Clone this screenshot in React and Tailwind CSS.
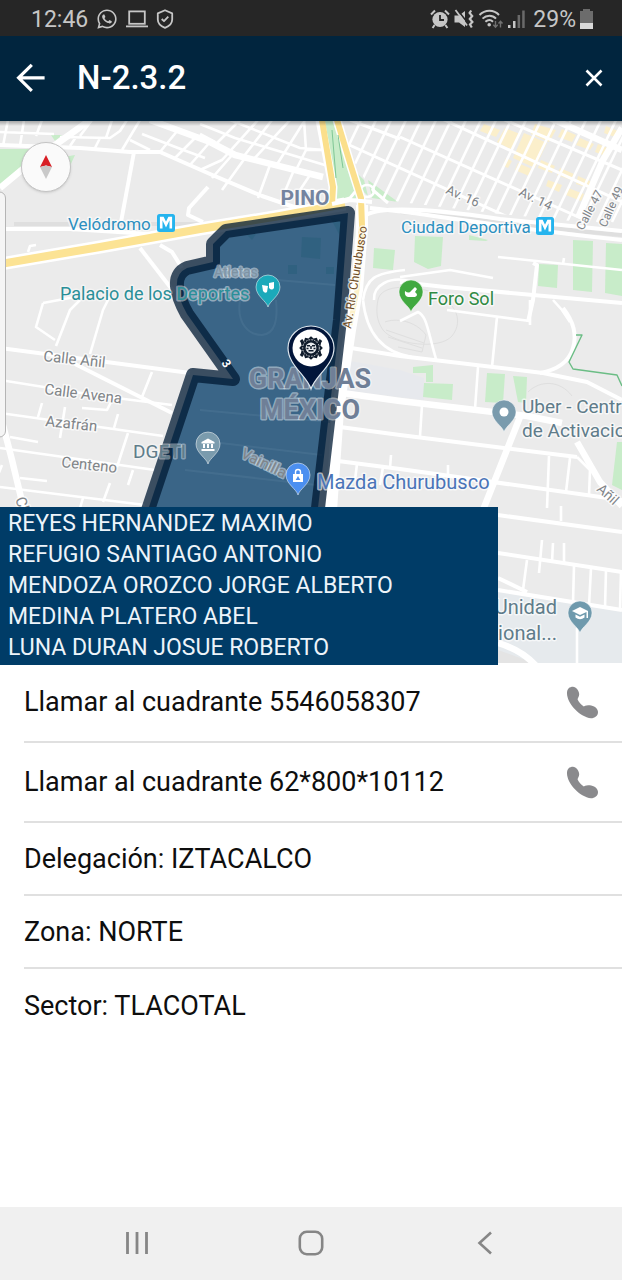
import React from "react";
import { FaWhatsapp } from "react-icons/fa";

const officers = [
  "REYES HERNANDEZ MAXIMO",
  "REFUGIO SANTIAGO ANTONIO",
  "MENDOZA OROZCO JORGE ALBERTO",
  "MEDINA PLATERO ABEL",
  "LUNA DURAN JOSUE ROBERTO",
];

const calls = [
  { label: "Llamar al cuadrante 5546058307", href: "tel:5546058307" },
  { label: "Llamar al cuadrante 62*800*10112", href: "tel:62*800*10112" },
];

const details = ["Delegación: IZTACALCO", "Zona: NORTE", "Sector: TLACOTAL"];

/* ---------- status bar ---------- */

function StatusBar() {
  return (
    <div className="flex h-9 items-center justify-between bg-[#262626] pr-[29px] pl-[31px] pt-0.5 text-[23px] leading-none text-[#c6c6c6]">
      <div className="flex items-center gap-2">
        <span>12:46</span>
        <FaWhatsapp className="size-[22px]" aria-hidden="true" />
        <svg className="h-[18px] w-[22px]" viewBox="0 0 22 18" fill="none" stroke="currentColor" strokeWidth="1.8" aria-hidden="true">
          <rect x="3.2" y="1.4" width="15.6" height="12.4" />
          <path d="M0 16.4h22" />
        </svg>
        <svg className="h-5 w-[18px]" viewBox="0 0 18 20" fill="none" stroke="currentColor" strokeWidth="1.8" strokeLinejoin="round" aria-hidden="true">
          <path d="M9 1.2 L16.2 4.4 V10.4 C16.2 14.2 13.4 17 9 18.8 C4.6 17 1.8 14.2 1.8 10.4 V4.4 Z" />
          <path d="M5.7 10 L8 12.2 L12.3 7.6" />
        </svg>
      </div>
      <div className="flex items-center gap-1">
        <svg className="size-5" viewBox="0 0 20 20" aria-hidden="true">
          <circle cx="10" cy="10.5" r="7.6" fill="currentColor" />
          <path d="M1 5.5 L5 1.5 M19 5.5 L15 1.5" stroke="currentColor" strokeWidth="2" fill="none" />
          <path d="M4.6 16 L2.6 19 M15.4 16 L17.4 19" stroke="currentColor" strokeWidth="2" />
          <path d="M10 6 V11 H14" stroke="#262626" strokeWidth="1.8" fill="none" />
        </svg>
        <svg className="size-5" viewBox="0 0 20 20" aria-hidden="true">
          <path d="M.5 6.5 H5 L11 2 V18 L5 13.500 H.5 Z" fill="currentColor" />
          <path d="M3.200 .5 L13 13" stroke="#262626" strokeWidth="1.600" />
          <path d="M1.500 1 L13 16.500" stroke="currentColor" strokeWidth="1.800" />
          <path d="M17.200 1.500 L15.600 4 L18.200 7 L15.800 10 L18.400 13 L16 15.500 L17.800 18.500" stroke="currentColor" strokeWidth="2.200" fill="none" />
        </svg>
        <svg className="h-5 w-[26px]" viewBox="0 0 26 20" fill="none" stroke="currentColor" aria-hidden="true">
          <path d="M1.5 6 C7 .4 16 .4 21 6 M4.5 9.6 C8.5 5.8 14.5 5.8 18 9.6 M7.4 12.8 C9.8 10.6 12.8 10.6 15 12.8" strokeWidth="2" />
          <circle cx="11.2" cy="15.8" r="1.8" fill="currentColor" stroke="none" />
          <path d="M17.5 12 V18 M15.3 15.8 L17.5 18.2 L19.7 15.8 M22.5 18.5 V12.5 M20.5 14.5 L22.5 12.2 L24.5 14.5" stroke="#707070" strokeWidth="1.4" />
        </svg>
        <svg className="h-5 w-[17px]" viewBox="0 0 17 20" aria-hidden="true">
          <path d="M0 16h2.5v3H0z M5 12h2.5v7H5z" fill="currentColor" />
          <path d="M9.6 6h2.5v13H9.6z M14.2 1.5h2.5v17.5h-2.5z" fill="#6a6a6a" />
        </svg>
        <span className="ml-1">29%</span>
        <svg className="h-5 w-[13px]" viewBox="0 0 13 20" aria-hidden="true">
          <path d="M3 0h7v2h3v18H0V2h3z" fill="#6c6c6c" />
          <path d="M0 14h13v6H0z" fill="#d8d8d8" />
        </svg>
      </div>
    </div>
  );
}

function Header() {
  return (
    <header className="flex h-[85px] items-center bg-[#01253e] pr-[19px] pb-0.5 pl-4 text-white">
      <button type="button" aria-label="Volver" className="flex size-[30px] items-center justify-center">
        <svg className="size-[30px]" viewBox="0 0 30 30" fill="none" stroke="currentColor" strokeWidth="3.2" aria-hidden="true">
          <path d="M15.8 1.8 L2.6 14.8 L15.8 27.8 M3 14.8 H28.6" />
        </svg>
      </button>
      <h1 className="ml-[31px] grow text-[33px] leading-none font-medium">N-2.3.2</h1>
      <button type="button" aria-label="Cerrar" className="flex size-[18px] items-center justify-center">
        <svg className="size-[18px]" viewBox="0 0 18 18" stroke="currentColor" strokeWidth="2.6" aria-hidden="true">
          <path d="M1.5 1.5 L16.5 16.5 M16.5 1.5 L1.5 16.5" />
        </svg>
      </button>
    </header>
  );
}

/* ---------- map ---------- */

const wideRoads = [
  "M0 188 L30 163 L90 120",
  "M150 120 L210 142 L235 155 L323 177",
  "M550 118 L622 150",
  "M622 128 L603 160 L578 218",
  "M335 392 L400 401 L527 416 L562 423",
  "M520 417 L485 505 L473 535",
  "M3 425 L12 460 L24 510",
  "M577 442 L600 482 L622 506",
  "M498 643 C515 648 527 655 538 668",
];

const mediumRoads = [
  "M0 145 L80 148 L130 152 L160 152 L210 174 L262 196 L300 209",
  "M134 152 L121 222",
  "M0 229 L70 229 L150 234",
  "M140 248 L174 292",
  "M160 245 L172 252 L182 268",
  "M345 347 L400 356 L543 373 L587 382 L622 400",
  "M563 308 C574 322 577 335 573 348 C569 362 556 370 540 373",
  "M0 348 L190 373",
  "M75 364 L172 413",
  "M340 427 L400 435 L577 457",
  "M400 282 L445 287 L622 303",
  "M338 461 L400 469 L622 500",
  "M498 515 L622 532",
  "M498 553 L622 572",
  "M498 590 L622 610",
  "M498 578 L527 592",
  "M366 215 C375 210 400 204 500 219 L622 231",
  "M370 208 C430 214 500 227 622 240",
  "M208 187 L189 208 L188 215 L203 222",
  "M533 263 L537 265 L533 300 L528 322",
];

const thinRoads = [
  "M0 132 L54 134 M8 120 L3 146 M24 120 L20 146 M42 120 L36 136 M60 137 L110 138 L120 131 L127 120 M70 146 L76 137 M95 148 L100 138 M80 136 L92 120 M106 138 L112 120 M122 150 L140 120",
  "M160 152 L178 130 M175 158 L196 137 M190 165 L210 142 M142 134 L178 148 L205 158 M130 140 L150 150",
  "M200 170 L222 160 L258 120 M233 154 L212 178 M253 160 L290 120 M276 166 L305 120 M296 170 L306 150 L304 120 M230 120 L300 148 L324 150 M200 124 L235 138 L328 166 M222 190 L245 158 M258 198 L270 165 M240 120 L214 146 M272 120 L244 156 M200 134 L215 142",
  "M300 190 L310 175 M280 203 L294 170 M306 150 L326 150 M304 190 L330 192",
  "M498 257 L622 270 M553 300 L562 310 L570 322 M400 277 L450 270 L493 278 M564 258 L563 264",
  "M447 310 L530 321 M530 300 L530 325 M497 317 L492 367",
  "M400 321 L418 312 C427 316 428 332 436 359",
  "M363 300 C366 330 380 352 412 357 M374 300 C373 285 390 276 410 281 M363 300 C366 278 375 273 405 270",
  "M422 405 L420 436 M478 367 L475 409 M549 456 L547 508 M570 458 L566 492 M577 457 L590 470 L589 496 M448 465 L448 475",
  "M357 464 L355 480 M383 467 L380 485 M391 455 L390 468",
  "M542 540 L539 573 M553 543 L552 562 M564 543 L564 563 M561 506 L561 521 M527 560 L523 590 M574 566 L573 603 M591 568 L589 606 M606 570 L605 608 M621 572 L620 610 M577 628 L577 664",
  "M0 380 L100 396 L172 405 M0 413 L163 436 M0 448 L155 470 M0 487 L145 505",
  "M152 372 L142 397 M118 414 L114 428 M128 433 L117 467 M65 407 L60 438 M42 403 L38 417 M133 470 L128 485 M110 483 L103 502 M82 408 L107 410 L112 400 M10 437 L38 442 M20 478 L47 481 M83 498 L80 508 M2 465 L-2 475",
  "M43 303 L36 327 L55 340 M80 300 L70 310 L56 346 M110 296 L103 310 L90 354 M43 303 L75 297",
  "M28 252 L30 246 L36 245",
];

const greens = [
  "M0 149 L42 149 L0 187 Z",
  "M51 135 L62 135 L55 141 Z",
  "M58 158 L75 155 L65 177 Z",
  "M415 236 L443 237 L441 266 L428 269 L414 262 Z",
  "M469 235 L488 240 L486 241 L469 240 Z",
  "M573 240 L593 241 L592 292 L573 290 Z",
  "M606 243 L622 244 L622 296 L605 293 Z",
  "M539 264 L558 265 L557 288 L538 286 Z",
  "M374 248 L395 250 L393 270 L373 268 Z",
  "M487 373 L505 374 L503 403 L485 402 Z",
  "M513 376 L527 377 L526 403 L518 402 Z",
  "M424 383 L453 384 L452 400 L423 397 Z",
  "M413 367 L433 365 L433 382 L426 382 L426 373 L413 373 Z",
  "M617 442 L622 442 L622 490 L612 485 Z",
  "M322 120 L338 120 L351 165 L362 195 L352 200 L333 201 Z",
  "M354 170 L364 180 L368 196 L362 190 Z M368 180 L398 202 L372 198 Z",
  "M357 220 L361 222 L358 240 L355 240 Z",
];

const commercial = [
  "M484 124 L500 130 L496 137 L480 131 Z",
  "M505 128 L520 134 L512 150 L497 142 Z",
  "M524 133 L547 143 L535 168 L513 158 Z",
  "M535 124 L556 130 L549 142 L531 134 Z",
  "M506 158 L512 161 L508 168 L503 166 Z",
  "M518 163 L532 169 L529 176 L515 170 Z",
  "M562 129 L576 135 L572 142 L558 137 Z",
  "M580 138 L594 144 L590 150 L576 145 Z",
  "M541 160 L555 166 L552 173 L538 168 Z",
  "M560 168 L574 174 L571 180 L557 175 Z",
  "M578 176 L592 182 L589 188 L576 184 Z",
  "M548 180 L562 185 L559 192 L546 186 Z",
  "M568 188 L584 194 L581 201 L566 195 Z",
  "M598 144 L612 150 L608 157 L595 152 Z",
  "M606 126 L618 131 L615 137 L604 133 Z",
];

const crossStreets = Array.from({ length: 22 }, (_, i) => 350 + i * 15);

function Pin({ x, y, color, children }) {
  return (
    <g transform={`translate(${x} ${y})`}>
      <path
        d="M0 17 C-1.5 11 -12 6 -12 -3 A12 12 0 0 1 12 -3 C12 6 1.5 11 0 17 Z"
        fill={color}
        stroke="#ffffff"
        strokeOpacity=".5"
        strokeWidth="1"
      />
      {children}
    </g>
  );
}

function MetroBadge({ x, y }) {
  return (
    <g transform={`translate(${x} ${y})`}>
      <rect width="18" height="18" rx="2.5" fill="#25b4ee" />
      <path d="M4.2 14.5 V4 H5.800 L9 10.500 L12.200 4 H13.800 V14.500" fill="none" stroke="#fff" strokeWidth="2.6" />
    </g>
  );
}

function Emblem() {
  const rays = Array.from({ length: 12 }, (_, i) => i * 30);
  return (
    <g transform="translate(311 348)">
      <path
        d="M0 41 C-4 28 -23 17 -23 0 A23 22 0 0 1 23 0 C23 17 4 28 0 41 Z"
        fill="#01153a"
        stroke="#dfe7ee"
        strokeWidth="1.2"
      />
      <circle r="18.5" fill="#fff" />
      <g fill="#101c2c">
        {rays.map((r) => (
          <path key={r} transform={`rotate(${r})`} d="M0 -11.8 L2.6 -9.5 L1.8 -6 H-1.8 L-2.6 -9.5 Z" />
        ))}
        <circle r="8" />
      </g>
      <circle r="8.3" fill="none" stroke="#fff" strokeWidth=".8" strokeDasharray="1.6 1.2" />
      <circle r="5.4" fill="#e8ebee" />
      <path d="M-4 -2.2 H-1 M1 -2.2 H4 M0 -2 V1 M-2.5 2.7 H2.5 M-4.5 .6 H-2.5 M2.5 .6 H4.5" stroke="#101c2c" strokeWidth="1.5" />
      <path d="M-8 -8 L-10.5 -6 M8 -8 L10.5 -6 M-8 8 L-10.5 6 M8 8 L10.5 6" stroke="#101c2c" strokeWidth="2.4" />
    </g>
  );
}

const zonePath =
  "M348 213 L226 231 L213 244 L213 262 L187 268 Q176 273 177 286 Q178 298 187 314 L233 379 L193 375 L143 525 L316 525 L340 320 Z";

function QuadrantMap() {
  return (
    <svg className="block w-full" viewBox="0 121 622 542" role="img" aria-label="Mapa del cuadrante N-2.3.2">
      <defs>
        <clipPath id="north-east-blocks">
          <path d="M342 118 L622 118 L622 226 L500 214 L400 202 L376 198 L352 158 Z" />
        </clipPath>
        <linearGradient id="bar-shadow" x1="0" y1="0" x2="0" y2="1">
          <stop offset="0" stopColor="#000" stopOpacity=".3" />
          <stop offset="1" stopColor="#000" stopOpacity="0" />
        </linearGradient>
      </defs>

      <rect x="0" y="121" width="622" height="542" fill="#ebebeb" />
      <path d="M498 592 L622 612 V663 H498 Z" fill="#e6eaed" />
      <path d="M498 650 L534 663 H498 Z" fill="#e4e4e4" />
      <path d="M345 360 L400 370 L424 378 V400 L340 390 Z" fill="#e7e9ed" />
      <g fill="#c8ecc9">
        {greens.map((d) => (
          <path key={d} d={d} />
        ))}
      </g>
      <g fill="#fbefcb">
        {commercial.map((d) => (
          <path key={d} d={d} />
        ))}
      </g>

      <g fill="none" stroke="#dfdfdf" strokeWidth="1">
        <path d="M14 224 H205 M400 212 C450 216 540 228 622 235" strokeWidth="4" />
        <path d="M378 300 C380 288 400 284 425 290 C455 298 465 320 452 336 C440 350 395 345 383 330 C376 320 376 310 378 300 Z" />
        <path d="M385 322 C395 318 415 320 426 335 L422 352 L398 347 M386 330 L424 343 M388 337 L422 348" />
        <path d="M528 392 C540 380 560 380 572 396" />
      </g>

      <g fill="none" stroke="#fff" strokeLinejoin="round">
        <g strokeWidth="2.6">
          {thinRoads.map((d) => (
            <path key={d} d={d} />
          ))}
          <g clipPath="url(#north-east-blocks)">
            {crossStreets.map((x) => (
              <path key={x} d={`M${x + 12} 118 L${x - 38} 222`} />
            ))}
            <path d="M345 143 L510 218 M400 137 L585 220 M440 118 L622 202 M500 118 L622 170 M350 120 L400 139" strokeWidth="3" />
          </g>
          <ellipse cx="367" cy="191" rx="7" ry="6" />
          <path d="M333 203 L350 198 L360 186 M374 191 L388 203" strokeWidth="3" />
        </g>
        <g strokeWidth="4">
          {mediumRoads.map((d) => (
            <path key={d} d={d} />
          ))}
        </g>
        <g strokeWidth="6.5">
          {wideRoads.map((d) => (
            <path key={d} d={d} />
          ))}
        </g>
      </g>

      <g fill="none" strokeLinejoin="round">
        <path d="M0 264 L100 247 L200 229 L280 216 L345 204" stroke="#fff" strokeWidth="13" />
        <path d="M362 205 L362 228 L357 290 L350 330 L338 410 L330 525" stroke="#fff" strokeWidth="12" />
        <path d="M320 120 L333 187 L332 206 M337 120 L350 163 L361 198 L362 226" stroke="#fff" strokeWidth="9" />
        <path d="M0 264 L100 247 L200 229 L280 216 L345 204" stroke="#fce394" strokeWidth="8" />
        <path d="M322 120 L333 187 L332 204 M337 120 L350 163 L361 198 L362 226 L360 250" stroke="#fbdf8b" strokeWidth="6" />
        <path d="M360 250 L357 290 L350 325" stroke="#fcf1c8" strokeWidth="5" />
        <path d="M332 204 L350 200 L372 202" stroke="#fff" strokeWidth="4" />
        <path d="M332 130 L336 178 M338 135 L343 168" stroke="#7fc796" strokeWidth="1" />
        <path d="M576 335 H582 L569 362 L573 369 L617 375 L622 386" stroke="#6bbd85" strokeWidth="1.4" />
      </g>

      <path d={zonePath} fill="#033b68" fillOpacity=".76" />
      <g fill="#1f5c74" fillOpacity=".35">
        <path d="M302 237 L321 238 L320 259 L301 257 Z M330 217 L341 220 L340 236 Z M288 265 H297 V274 H288 Z M326 267 H334 V274 H326 Z M247 235 L256 234 L252 240 Z" />
      </g>
      <path
        d="M240 300 C236 325 250 335 262 335 C275 334 278 320 276 300 M200 410 L330 422 M196 440 L322 455 M185 470 L316 485 M220 275 L335 285"
        fill="none"
        stroke="#537a98"
        strokeOpacity=".4"
        strokeWidth="2"
      />
      <path d={zonePath} fill="none" stroke="#001a33" strokeOpacity=".75" strokeWidth="14" strokeLinejoin="round" />

      <g transform="translate(0 192)">
        <rect x="-12" y="0" width="17.5" height="245" rx="6" fill="#f5f5f5" stroke="#b5b5b5" />
      </g>

      <g fontFamily="Roboto, sans-serif" stroke="#fff" strokeOpacity=".65" strokeWidth="3" strokeLinejoin="round" paintOrder="stroke">
        <g fontSize="17" fill="#2b8fc0">
          <text x="68" y="230">Velódromo</text>
          <text x="401" y="233">Ciudad Deportiva</text>
        </g>
        <text x="60" y="300" fontSize="18" fill="#2a8f98" strokeOpacity=".45">Palacio de los Deportes</text>
        <text x="428" y="305" fontSize="18" fill="#2f8a43">Foro Sol</text>
        <text x="317" y="489" fontSize="20" fill="#4a74b8">Mazda Churubusco</text>
        <g fontSize="19" fill="#5f7c8a">
          <text x="133" y="458" strokeOpacity=".4">DGETI</text>
          <text x="522" y="413">Uber - Centr</text>
          <text x="522" y="437">de Activacio</text>
        </g>
        <g fontSize="20" fill="#5f7c8a" textAnchor="end">
          <text x="557" y="614">Unidad</text>
          <text x="557" y="640">Habitacional...</text>
        </g>
        <g fontWeight="700" fill="#7484a0" textAnchor="middle">
          <text x="305" y="205" fontSize="21">PINO</text>
          <g fontSize="27" fill="#6f7f97" strokeOpacity=".45">
            <text x="310" y="388">GRANJAS</text>
            <text x="310" y="419">MÉXICO</text>
          </g>
        </g>
        <g fontSize="15" fill="#808488">
          <text transform="translate(43 361) rotate(6)">Calle Añil</text>
          <text transform="translate(44 394) rotate(7)">Calle Avena</text>
          <text transform="translate(45 426) rotate(6)">Azafrán</text>
          <text transform="translate(61 467) rotate(6)">Centeno</text>
          <text transform="translate(15 499) rotate(70)">Chicle</text>
          <text transform="translate(240 457) rotate(26)" strokeOpacity=".45">Vainilla</text>
        </g>
        <g fontSize="14" fill="#808488">
          <text transform="translate(596 490) rotate(42)">Añil</text>
          <text x="214" y="277" fill="#7e93a3" strokeOpacity=".45">Atletas</text>
        </g>
        <g fontSize="13" fill="#808488">
          <text transform="translate(445 193) rotate(24)">Av. 16</text>
          <text transform="translate(518 195) rotate(26)">Av. 14</text>
        </g>
        <g fontSize="12" fill="#808488">
          <text transform="translate(583 231) rotate(-62)">Calle 47</text>
          <text transform="translate(606 228) rotate(-66)">Calle 49</text>
          <text transform="translate(351 329) rotate(-81)" fill="#6e4a1e">Av. Río Churubusco</text>
        </g>
        <text transform="translate(221 363) rotate(55)" fontSize="12" fontWeight="700" fill="#fff" stroke="none">3</text>
      </g>

      <MetroBadge x={157} y={214} />
      <MetroBadge x={536} y={217} />

      <Pin x={268} y={290} color="#1ba9ba">
        <path d="M-6 -5 L0 -4 L-1 2 Q-3 4 -5 1 Z M1 -7 L6 -8 L6 -2 Q4 1 1 -2 Z" fill="#fff" />
      </Pin>
      <Pin x={411} y={295} color="#41a940">
        <path d="M-6 -4 Q-2 -1 0 -4 L4 -8 L6 -6 L4 -3 Q8 0 4 2 H-3 Q-7 1 -6 -4 Z" fill="#fff" />
      </Pin>
      <Pin x={208} y={447} color="#7a9bad">
        <path d="M-6.5 -5 L0 -8.5 L6.5 -5 V-3.5 H-6.5 Z M-5 -3 H-3 V1 H-5 Z M-1 -3 H1 V1 H-1 Z M3 -3 H5 V1 H3 Z M-6.5 2 H6.5 V4 H-6.5 Z" fill="#fff" />
      </Pin>
      <Pin x={298} y={478} color="#4b8ff0">
        <path d="M-5 -4 H5 V4 H-5 Z" fill="#fff" />
        <path d="M-2.5 -4 V-6 A2.5 2.5 0 0 1 2.5 -6 V-4" fill="none" stroke="#fff" strokeWidth="1.4" />
        <path d="M0 -2 L2.3 2 H-2.3 Z" fill="#4b8ff0" />
      </Pin>
      <Pin x={504} y={415} color="#7a9bad">
        <circle cy="-3" r="4.5" fill="#fff" />
      </Pin>
      <Pin x={580} y={616} color="#6f9aad">
        <path d="M-8 -5 L0 -9 L8 -5 V2 H6.5 V-4 L0 -1 Z" fill="#fff" />
        <path d="M-4.5 -1.5 L0 .8 L4.5 -1.5 V1.5 Q0 5 -4.5 1.5 Z" fill="#fff" />
      </Pin>
      <Emblem />

      <rect x="0" y="121" width="622" height="5" fill="url(#bar-shadow)" />
    </svg>
  );
}

function MapSection() {
  return (
    <section className="relative">
      <QuadrantMap />
      <button
        type="button"
        aria-label="Orientar al norte"
        className="absolute top-[21px] left-[21px] flex size-[50px] items-center justify-center rounded-full border border-[#c4c4c4] bg-[#fafafa] shadow"
      >
        <svg className="h-6 w-3" viewBox="0 0 12 24" aria-hidden="true">
          <path d="M6 0 L12 12 L6 10.5 L0 12 Z" fill="#d81f26" />
          <path d="M0 12 L6 10.5 L12 12 L6 24 Z" fill="#c9c9c9" />
        </svg>
      </button>
      <ul className="absolute -bottom-0.5 left-0 w-4/5 bg-[#003c67] pt-px pb-0.5 pl-2 text-[23px] leading-[31px] text-[#edf4fa]">
        {officers.map((name) => (
          <li key={name}>{name}</li>
        ))}
      </ul>
    </section>
  );
}

/* ---------- list ---------- */

function PhoneIcon() {
  return (
    <svg className="size-[33px] shrink-0 text-[#8a8a8d]" viewBox="0 0 98 100" fill="currentColor" aria-hidden="true">
      <path d="M2 22 C2 8 10 2 20 2 C30 3 39 14 39 25 C39 32 35 36 34 40 C37 48 45 57 53 62 C58 58 64 58 71 58 C83 59 96 67 96 79 C96 91 86 98 75 98 C40 94 2 52 2 22 Z" />
    </svg>
  );
}

function InfoList() {
  return (
    <ul className="pl-6 text-[27px] leading-8 text-[#0e0e0e]">
      {calls.map((c) => (
        <li key={c.href} className="border-b-2 border-[#e0e0e0]">
          <a href={c.href} className="flex h-[78px] items-center justify-between pr-[23px]">
            <span>{c.label}</span>
            <PhoneIcon />
          </a>
        </li>
      ))}
      {details.map((d) => (
        <li key={d} className="flex h-[73px] items-center border-b-2 border-[#e0e0e0] last:border-0">
          {d}
        </li>
      ))}
    </ul>
  );
}

function NavBar() {
  return (
    <nav className="flex h-[73px] items-center justify-around bg-[#f0f0f0] px-[50px] pb-0.5 text-[#868686]">
      <button type="button" aria-label="Recientes">
        <svg className="size-6" viewBox="0 0 24 24" stroke="currentColor" strokeWidth="2.8" aria-hidden="true">
          <path d="M2.5 1 V23 M12 1 V23 M21.5 1 V23" />
        </svg>
      </button>
      <button type="button" aria-label="Inicio">
        <svg className="size-[26px]" viewBox="0 0 26 26" fill="none" stroke="currentColor" strokeWidth="2.6" aria-hidden="true">
          <rect x="1.8" y="1.8" width="22.4" height="22.4" rx="7" />
        </svg>
      </button>
      <button type="button" aria-label="Atrás">
        <svg className="size-6" viewBox="0 0 24 24" fill="none" stroke="currentColor" strokeWidth="2.6" aria-hidden="true">
          <path d="M18 1.5 L6.5 12 L18 22.5" />
        </svg>
      </button>
    </nav>
  );
}

export default function App() {
  return (
    <div className="flex min-h-screen flex-col bg-white font-[Roboto,sans-serif]">
      <StatusBar />
      <Header />
      <main className="grow">
        <MapSection />
        <InfoList />
      </main>
      <NavBar />
    </div>
  );
}
